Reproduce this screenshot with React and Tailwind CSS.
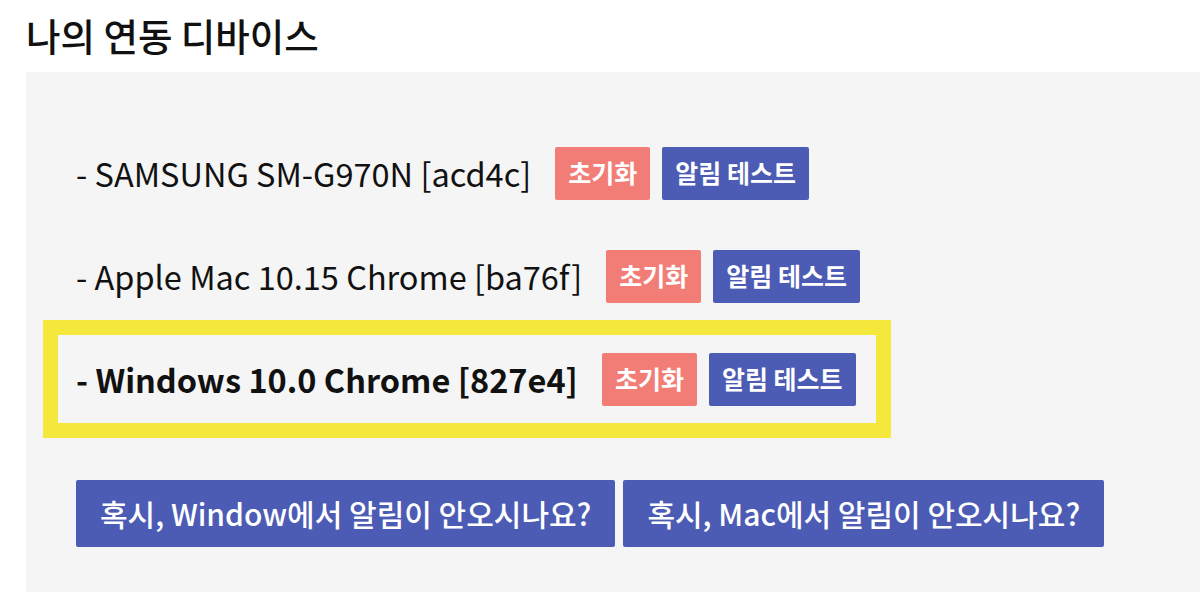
import React from 'react'

const devices = [
  { id: 'acd4c', name: 'SAMSUNG SM-G970N' },
  { id: 'ba76f', name: 'Apple Mac 10.15 Chrome' },
  { id: '827e4', name: 'Windows 10.0 Chrome', current: true },
]

function DeviceRow({ device }) {
  return (
    <div
      className={`inline-flex items-center h-[88px] pl-[18px] pr-5 ${
        device.current ? 'outline-[15px] outline-solid outline-[#f4e83c]' : ''
      }`}
    >
      <span className={`text-[32.5px] text-[#111] ${device.current ? 'font-bold' : 'font-normal'}`}>
        - {device.name} [{device.id}]
      </span>
      <div className="flex items-center gap-3 ml-6">
        <button className="h-[53px] px-[13px] rounded-[2px] bg-[#f27d77] text-white text-[25px] font-bold">
          초기화
        </button>
        <button className="h-[53px] px-[13px] rounded-[2px] bg-[#4c5cb4] text-white text-[25px] font-bold">
          알림 테스트
        </button>
      </div>
    </div>
  )
}

export default function App() {
  return (
    <div
      className="min-h-screen bg-white pl-[26px]"
      style={{ fontFamily: '"Noto Sans CJK KR", "Noto Sans", sans-serif' }}
    >
      <div className="h-[72px] flex items-center">
        <h2 className="text-[37.5px] font-medium text-[#111] -mt-[2px]">나의 연동 디바이스</h2>
      </div>

      <div className="bg-[#f5f5f5] min-h-[520px] pt-[57px] pl-[32px]">
        <div className="flex flex-col items-start gap-[15px]">
          {devices.map((d) => (
            <DeviceRow key={d.id} device={d} />
          ))}
        </div>

        <div className="flex gap-2 mt-[57px] ml-[18px]">
          <button className="h-[67px] px-6 rounded-[2px] bg-[#4c5cb4] text-white text-[30px] font-medium">
            혹시, Window에서 알림이 안오시나요?
          </button>
          <button className="h-[67px] px-6 rounded-[2px] bg-[#4c5cb4] text-white text-[30px] font-medium">
            혹시, Mac에서 알림이 안오시나요?
          </button>
        </div>
      </div>
    </div>
  )
}
